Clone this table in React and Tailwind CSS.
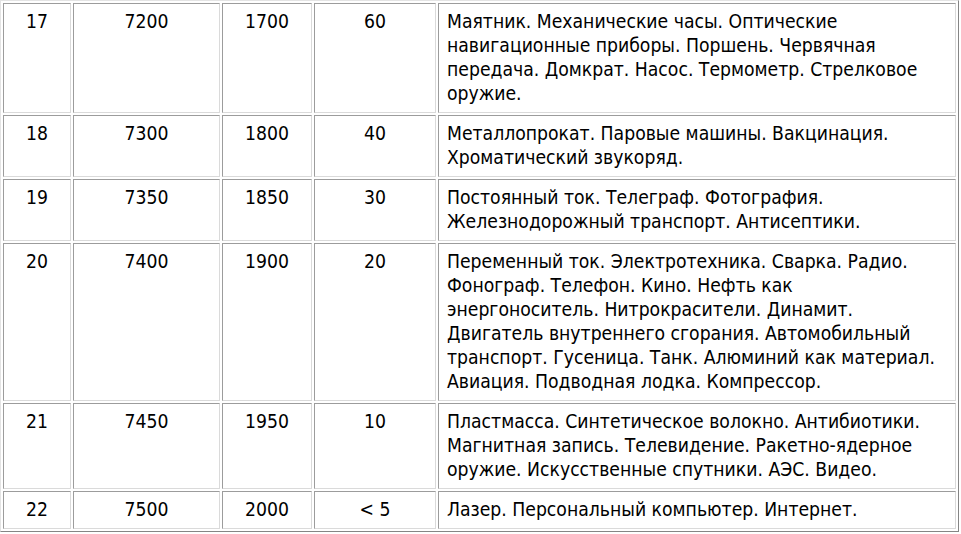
import React from "react";

const rows = [
  {
    n: "17", a: "7200", y: "1700", p: "60",
    lines: [
      "Маятник. Механические часы. Оптические",
      "навигационные приборы. Поршень. Червячная",
      "передача. Домкрат. Насос. Термометр. Стрелковое",
      "оружие.",
    ],
  },
  {
    n: "18", a: "7300", y: "1800", p: "40",
    lines: ["Металлопрокат. Паровые машины. Вакцинация.", "Хроматический звукоряд."],
  },
  {
    n: "19", a: "7350", y: "1850", p: "30",
    lines: ["Постоянный ток. Телеграф. Фотография.", "Железнодорожный транспорт. Антисептики."],
  },
  {
    n: "20", a: "7400", y: "1900", p: "20",
    lines: [
      "Переменный ток. Электротехника. Сварка. Радио.",
      "Фонограф. Телефон. Кино. Нефть как",
      "энергоноситель. Нитрокрасители. Динамит.",
      "Двигатель внутреннего сгорания. Автомобильный",
      "транспорт. Гусеница. Танк. Алюминий как материал.",
      "Авиация. Подводная лодка. Компрессор.",
    ],
  },
  {
    n: "21", a: "7450", y: "1950", p: "10",
    lines: [
      "Пластмасса. Синтетическое волокно. Антибиотики.",
      "Магнитная запись. Телевидение. Ракетно-ядерное",
      "оружие. Искусственные спутники. АЭС. Видео.",
    ],
  },
  {
    n: "22", a: "7500", y: "2000", p: "< 5",
    lines: ["Лазер. Персональный компьютер. Интернет."],
  },
];

const cell =
  "border border-t-[#9c9c9c] border-l-[#9c9c9c] border-r-[#dadada] border-b-[#dadada] bg-white py-[6px] leading-[24px]";

export default function App() {
  return (
    <div className="min-h-screen bg-white font-['DejaVu_Sans_Condensed','DejaVu_Sans',sans-serif] text-[19.2px] text-black">
      <div className="w-[959px] border border-t-[#e4e4e4] border-l-[#e4e4e4] border-r-[#858585] border-b-[#858585] p-[2px]">
        <div className="grid grid-cols-[68px_147px_90px_122px_518px] gap-[2px]">
          {rows.map((r) => (
            <React.Fragment key={r.n}>
              <div className={`${cell} text-center`}>{r.n}</div>
              <div className={`${cell} text-center`}>{r.a}</div>
              <div className={`${cell} text-center`}>{r.y}</div>
              <div className={`${cell} text-center`}>{r.p}</div>
              <div className={`${cell} px-[8px] whitespace-nowrap`}>
                {r.lines.map((l, i) => (
                  <div key={i}>{l}</div>
                ))}
              </div>
            </React.Fragment>
          ))}
        </div>
      </div>
    </div>
  );
}
